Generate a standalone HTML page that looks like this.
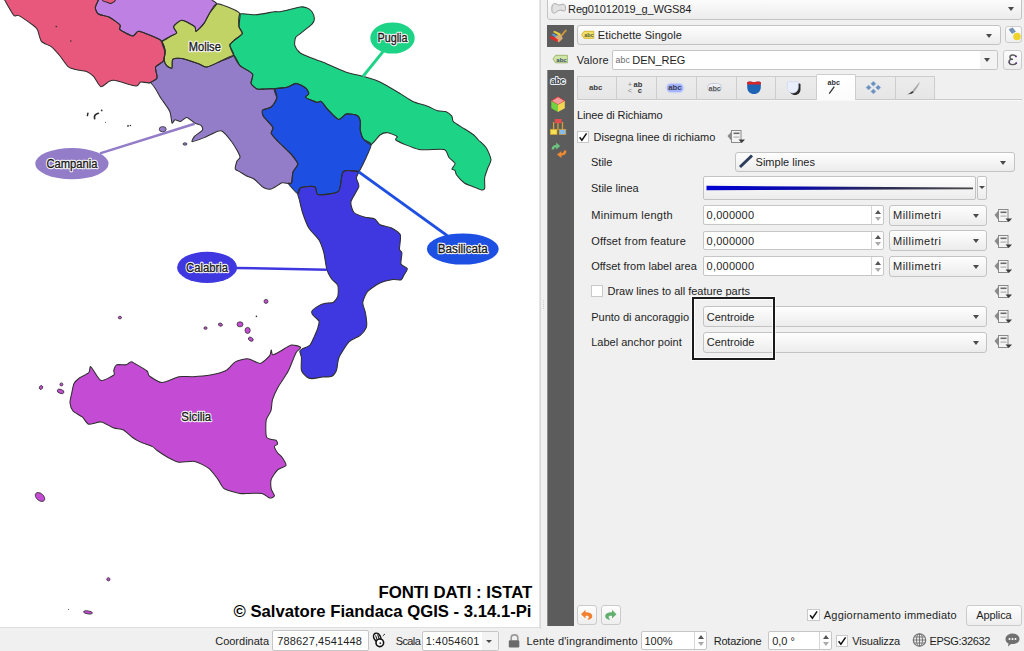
<!DOCTYPE html><html><head><meta charset="utf-8"><style>
*{margin:0;padding:0;box-sizing:border-box}
html,body{width:1024px;height:651px;overflow:hidden;background:#f0f0f0;font-family:"Liberation Sans",sans-serif;color:#1e1e1e}
.t{position:absolute;white-space:nowrap;line-height:1;font-family:"Liberation Sans",sans-serif}
.cb{position:absolute;border:1px solid #c3c3c3;border-radius:3px;background:linear-gradient(#fefefe,#ececec)}
.fld{position:absolute;border:1px solid #c6c6c6;border-radius:2px;background:#fff}
.chk{position:absolute;border:1px solid #c9c9c9;background:#fff}
.btn{position:absolute;border:1px solid #cbcbcb;border-radius:3px;background:linear-gradient(#fdfdfd,#eeeeee)}
.arr{position:absolute;width:0;height:0}
.ic{position:absolute;overflow:visible}
.sp{position:absolute;background:#d6d6d6}
.blk{position:absolute;background:#5c5c5c}
.tab{position:absolute;border:1px solid #cdcdcd;border-bottom:none;background:linear-gradient(#ececec,#e6e6e6)}
</style></head><body><div style="position:absolute;left:0;top:0;width:540px;height:627px;background:#fff;overflow:hidden"><svg width="540" height="627" viewBox="0 0 540 627" style="position:absolute;left:0;top:0"><path d="M3.0,-2.0 C-7.9,-1.8 4.1,-0.9 4.7,0.0 C5.3,0.9 6.9,4.2 8.0,6.0 C9.1,7.8 12.7,14.5 14.0,15.6 C15.3,16.7 16.6,14.5 18.8,15.6 C20.9,16.7 30.6,23.4 32.8,25.0 C35.0,26.6 36.5,27.8 37.5,29.7 C38.5,31.6 39.8,39.4 41.4,41.4 C43.0,43.4 49.4,45.2 51.6,46.9 C53.8,48.6 58.0,53.6 60.0,56.0 C62.0,58.4 66.5,65.5 68.8,67.2 C71.0,68.9 77.5,69.8 79.7,70.3 C81.9,70.8 85.9,71.2 87.5,71.9 C89.1,72.6 92.2,74.9 93.8,76.6 C95.3,78.3 99.0,86.2 100.8,86.7 C102.6,87.2 107.7,82.0 109.4,81.2 C111.1,80.5 112.5,79.9 115.6,80.5 C118.7,81.1 133.1,85.8 136.0,86.0 C138.9,86.2 139.0,82.4 140.6,82.0 C142.2,81.6 147.5,83.3 149.4,82.8 C151.3,82.3 156.3,79.8 157.0,78.0 C157.7,76.2 154.9,69.2 155.6,67.2 C156.3,65.2 162.3,63.0 163.4,61.0 C164.5,59.0 165.2,52.3 165.0,50.0 C164.8,47.7 162.6,42.7 161.9,41.4 C161.2,40.1 161.4,40.2 158.8,39.0 C156.1,37.8 142.0,31.6 139.0,31.2 C136.0,30.9 135.0,36.2 132.8,36.0 C130.6,35.8 121.5,31.0 120.0,29.7 C118.5,28.4 121.3,26.5 120.0,25.0 C118.7,23.5 111.5,18.3 109.0,17.0 C106.5,15.7 100.0,15.1 98.4,14.0 C96.8,12.9 95.3,9.4 95.3,7.8 C95.3,6.2 98.0,1.1 98.4,0.0 C98.8,-1.1 109.5,-1.8 98.4,-2.0 C87.3,-2.2 13.9,-2.2 3.0,-2.0 Z" fill="#E8577C"/><path d="M98.4,-2.0 C111.6,-2.2 198.7,-2.2 211.9,-2.0 C225.1,-1.8 211.4,-0.7 211.9,0.0 C212.4,0.7 216.8,2.4 216.6,3.9 C216.4,5.4 211.5,10.2 210.0,12.5 C208.5,14.8 205.6,21.2 204.0,23.4 C202.4,25.6 197.1,30.9 196.0,31.2 C194.9,31.6 196.3,27.9 194.7,26.6 C193.1,25.3 184.5,20.3 182.0,20.3 C179.5,20.3 174.2,25.1 173.6,26.6 C173.0,28.1 177.0,31.7 176.7,32.8 C176.4,33.9 172.7,35.0 171.0,36.0 C169.3,37.0 163.3,41.0 161.9,41.4 C160.5,41.8 161.4,40.2 158.8,39.0 C156.1,37.8 142.0,31.6 139.0,31.2 C136.0,30.9 135.0,36.2 132.8,36.0 C130.6,35.8 121.5,31.0 120.0,29.7 C118.5,28.4 121.3,26.5 120.0,25.0 C118.7,23.5 111.5,18.3 109.0,17.0 C106.5,15.7 100.0,15.1 98.4,14.0 C96.8,12.9 95.3,9.4 95.3,7.8 C95.3,6.2 98.0,1.1 98.4,0.0 C98.8,-1.1 85.2,-1.8 98.4,-2.0 Z" fill="#BE80E2"/><path d="M216.6,3.9 C219.4,3.5 231.0,8.2 233.8,9.4 C236.5,10.6 239.4,12.0 240.0,14.0 C240.6,16.0 238.7,24.3 239.0,26.6 C239.3,28.9 242.9,32.0 242.3,33.6 C241.7,35.2 235.2,39.2 233.8,40.6 C232.3,42.0 229.8,43.6 229.8,45.3 C229.8,47.0 234.8,53.7 233.8,55.5 C232.7,57.3 224.1,59.7 221.0,61.0 C217.9,62.3 209.6,66.7 207.0,67.0 C204.4,67.3 201.9,65.0 199.0,64.0 C196.1,63.0 185.1,59.1 182.0,58.6 C178.9,58.1 174.0,58.3 172.8,59.4 C171.6,60.5 172.7,67.3 172.0,68.0 C171.3,68.7 167.5,66.6 166.6,65.6 C165.7,64.6 164.2,61.0 164.0,59.4 C163.8,57.8 165.2,53.7 165.0,51.6 C164.8,49.5 161.2,43.2 161.9,41.4 C162.6,39.6 169.3,37.0 171.0,36.0 C172.7,35.0 176.4,33.9 176.7,32.8 C177.0,31.7 173.0,28.1 173.6,26.6 C174.2,25.1 179.5,20.3 182.0,20.3 C184.5,20.3 193.1,25.3 194.7,26.6 C196.3,27.9 194.9,31.6 196.0,31.2 C197.1,30.9 202.4,25.6 204.0,23.4 C205.6,21.2 208.5,14.8 210.0,12.5 C211.5,10.2 213.8,4.3 216.6,3.9 Z" fill="#C2D366"/><path d="M240.0,14.0 C241.9,12.6 251.6,15.1 255.6,14.8 C259.6,14.5 271.6,12.1 274.4,11.7 C277.2,11.3 277.0,12.2 280.0,11.7 C283.0,11.2 297.2,7.5 300.3,7.0 C303.4,6.5 305.2,7.3 306.6,7.8 C308.0,8.3 311.1,10.4 312.0,11.7 C312.9,13.0 314.4,17.3 314.4,18.8 C314.4,20.2 313.6,22.5 312.0,24.2 C310.4,25.9 302.2,32.0 300.3,33.6 C298.4,35.2 296.2,36.1 295.6,37.5 C295.0,38.9 294.3,43.5 294.8,45.3 C295.3,47.1 297.8,51.3 300.3,53.0 C302.8,54.7 313.9,58.9 316.6,60.0 C319.3,61.1 320.4,61.1 323.8,62.5 C327.1,63.9 341.0,70.3 345.6,71.9 C350.2,73.5 359.4,75.2 363.4,76.4 C367.4,77.6 375.7,79.9 380.0,81.9 C384.3,83.9 396.5,91.3 400.3,93.6 C404.1,95.9 409.7,100.0 412.8,101.4 C415.9,102.8 424.0,104.9 426.9,106.0 C429.8,107.1 435.6,110.1 437.8,110.8 C440.0,111.5 444.0,111.0 445.6,111.6 C447.2,112.2 451.0,115.1 451.9,116.2 C452.8,117.4 451.9,120.2 453.4,121.7 C454.9,123.2 462.0,127.2 464.4,128.8 C466.8,130.3 472.1,133.7 473.8,135.0 C475.4,136.3 476.9,138.5 478.4,140.0 C479.9,141.5 484.8,145.5 486.2,147.8 C487.7,150.1 490.8,157.1 491.0,159.5 C491.2,161.9 488.5,165.9 487.8,168.0 C487.1,170.1 485.1,175.1 484.7,177.5 C484.3,179.9 485.1,186.9 484.7,188.4 C484.3,189.9 482.9,190.2 481.6,190.0 C480.3,189.8 475.8,187.7 473.8,186.9 C471.7,186.1 466.4,184.4 464.4,183.0 C462.4,181.6 457.7,176.5 456.6,175.0 C455.5,173.5 455.5,171.2 455.0,170.5 C454.5,169.8 451.9,169.8 451.9,169.0 C451.9,168.2 455.4,164.8 455.0,163.4 C454.6,162.0 450.0,158.8 448.8,157.2 C447.5,155.6 447.5,150.3 444.0,149.4 C440.5,148.5 424.6,150.4 419.0,149.4 C413.4,148.4 398.9,142.0 396.4,140.5 C393.9,139.0 398.2,137.5 397.2,136.6 C396.2,135.7 389.8,132.9 387.8,132.7 C385.8,132.5 381.9,133.6 380.0,135.0 C378.1,136.4 373.2,143.9 371.2,144.4 C369.3,144.9 364.7,140.6 363.4,139.0 C362.1,137.4 360.7,132.4 360.3,130.3 C359.9,128.2 360.7,122.7 360.3,121.0 C359.9,119.3 358.8,116.3 357.2,115.5 C355.6,114.7 348.4,113.5 346.2,114.0 C344.1,114.5 340.6,120.0 338.4,119.4 C336.2,118.8 329.5,111.3 327.5,109.2 C325.5,107.1 322.5,102.2 321.2,101.4 C320.0,100.6 318.4,102.7 316.6,102.2 C314.8,101.7 306.5,98.5 305.6,97.5 C304.7,96.5 308.8,94.7 308.8,93.6 C308.8,92.5 307.1,89.2 305.6,88.0 C304.1,86.8 298.4,83.5 296.2,83.4 C294.1,83.3 289.4,86.7 286.9,87.3 C284.4,87.9 277.0,88.7 274.4,88.9 C271.8,89.1 267.0,89.0 265.0,89.0 C263.0,89.0 258.8,89.7 257.2,89.0 C255.6,88.3 251.5,85.2 251.0,83.4 C250.5,81.7 253.8,76.1 252.5,74.0 C251.2,71.9 242.2,67.8 240.0,65.6 C237.8,63.4 234.9,57.9 233.8,55.5 C232.6,53.1 229.8,47.0 229.8,45.3 C229.8,43.6 232.3,42.0 233.8,40.6 C235.2,39.2 241.7,35.2 242.3,33.6 C242.9,32.0 239.3,28.9 239.0,26.6 C238.7,24.3 238.1,15.4 240.0,14.0 Z" fill="#1DD386"/><path d="M161.9,41.4 C161.9,41.2 164.8,47.7 165.0,50.0 C165.2,52.3 164.5,59.0 163.4,61.0 C162.3,63.0 156.3,65.2 155.6,67.2 C154.9,69.2 157.7,76.2 157.0,78.0 C156.3,79.8 150.1,82.2 149.4,82.8 C148.7,83.4 150.3,82.3 151.0,83.0 C151.7,83.7 154.5,87.3 155.6,89.0 C156.7,90.7 158.7,94.6 160.3,97.2 C161.9,99.8 168.3,108.2 169.7,111.2 C171.1,114.3 171.4,122.0 172.0,123.0 C172.6,124.0 174.0,120.0 175.0,119.8 C176.0,119.6 179.2,121.7 180.6,121.4 C182.0,121.1 185.3,117.3 186.9,117.5 C188.5,117.7 193.1,122.1 194.7,123.0 C196.3,123.9 200.1,124.5 201.0,125.3 C201.9,126.1 203.2,128.7 202.5,130.0 C201.8,131.3 195.9,134.9 194.7,136.2 C193.5,137.6 191.0,141.6 192.3,141.7 C193.6,141.8 203.3,137.9 205.6,137.0 C207.9,136.1 210.1,134.7 211.9,134.0 C213.7,133.3 218.9,129.8 221.2,130.8 C223.6,131.8 230.0,139.5 232.2,142.5 C234.4,145.5 239.5,154.4 240.0,156.6 C240.5,158.8 237.4,159.8 236.9,161.2 C236.4,162.7 234.9,167.8 235.3,169.0 C235.7,170.2 238.7,171.1 240.0,171.9 C241.3,172.7 244.6,175.0 246.2,175.8 C247.9,176.6 252.0,177.6 254.0,179.0 C256.0,180.4 261.4,186.3 263.4,187.5 C265.4,188.7 269.1,189.5 271.2,189.0 C273.4,188.5 280.2,183.4 282.2,182.8 C284.2,182.2 287.3,183.6 288.4,183.6 C289.5,183.6 291.1,184.2 291.6,182.8 C292.1,181.4 292.3,174.1 293.0,171.9 C293.7,169.7 298.0,166.0 297.8,164.0 C297.6,162.0 292.9,156.3 291.6,154.7 C290.3,153.1 288.5,151.6 286.9,150.0 C285.3,148.4 279.3,142.9 277.5,141.0 C275.7,139.1 271.8,135.0 271.2,133.4 C270.7,131.8 273.7,129.2 272.8,127.2 C271.9,125.2 264.6,118.3 263.4,116.2 C262.2,114.2 261.8,111.1 262.7,110.0 C263.6,108.9 269.6,108.4 271.2,107.0 C272.9,105.6 276.3,100.4 276.7,98.3 C277.1,96.2 275.8,90.0 274.4,88.9 C273.0,87.8 267.0,89.0 265.0,89.0 C263.0,89.0 258.8,89.7 257.2,89.0 C255.6,88.3 251.5,85.2 251.0,83.4 C250.5,81.7 253.8,76.1 252.5,74.0 C251.2,71.9 242.2,67.8 240.0,65.6 C237.8,63.4 236.0,56.0 233.8,55.5 C231.5,55.0 224.1,59.7 221.0,61.0 C217.9,62.3 209.6,66.7 207.0,67.0 C204.4,67.3 201.9,65.0 199.0,64.0 C196.1,63.0 185.1,59.1 182.0,58.6 C178.9,58.1 174.0,58.3 172.8,59.4 C171.6,60.5 172.7,67.3 172.0,68.0 C171.3,68.7 167.5,66.6 166.6,65.6 C165.7,64.6 164.2,61.0 164.0,59.4 C163.8,57.8 165.2,53.7 165.0,51.6 C164.8,49.5 161.9,41.6 161.9,41.4 Z" fill="#937DC9"/><path d="M274.4,88.9 C275.6,87.6 284.4,87.9 286.9,87.3 C289.4,86.7 294.1,83.3 296.2,83.4 C298.4,83.5 304.1,86.8 305.6,88.0 C307.1,89.2 308.8,92.5 308.8,93.6 C308.8,94.7 304.7,96.5 305.6,97.5 C306.5,98.5 314.8,101.7 316.6,102.2 C318.4,102.7 320.0,100.6 321.2,101.4 C322.5,102.2 325.5,107.1 327.5,109.2 C329.5,111.3 336.2,118.8 338.4,119.4 C340.6,120.0 344.1,114.5 346.2,114.0 C348.4,113.5 355.6,114.7 357.2,115.5 C358.8,116.3 359.9,119.3 360.3,121.0 C360.7,122.7 359.9,128.2 360.3,130.3 C360.7,132.4 362.1,137.4 363.4,139.0 C364.7,140.6 371.1,142.0 371.2,144.4 C371.4,146.8 366.5,156.8 365.0,160.0 C363.5,163.2 359.8,170.6 358.8,171.9 C357.7,173.2 357.4,171.0 355.6,171.0 C353.8,171.0 345.0,169.5 343.0,171.9 C341.0,174.3 341.3,188.8 338.4,191.4 C335.5,194.0 320.7,195.0 318.0,194.5 C315.3,194.0 317.0,187.5 315.0,186.7 C313.0,185.9 303.0,186.7 301.0,187.5 C299.0,188.3 299.3,194.2 297.8,193.8 C296.3,193.3 289.1,184.9 288.4,183.6 C287.7,182.3 291.1,184.2 291.6,182.8 C292.1,181.4 292.3,174.1 293.0,171.9 C293.7,169.7 298.0,166.0 297.8,164.0 C297.6,162.0 292.9,156.3 291.6,154.7 C290.3,153.1 288.5,151.6 286.9,150.0 C285.3,148.4 279.3,142.9 277.5,141.0 C275.7,139.1 271.8,135.0 271.2,133.4 C270.7,131.8 273.7,129.2 272.8,127.2 C271.9,125.2 264.6,118.3 263.4,116.2 C262.2,114.2 261.8,111.1 262.7,110.0 C263.6,108.9 269.6,108.4 271.2,107.0 C272.9,105.6 276.3,100.4 276.7,98.3 C277.1,96.2 273.2,90.2 274.4,88.9 Z" fill="#1C4FE2"/><path d="M297.8,193.8 C298.0,192.3 299.0,188.3 301.0,187.5 C303.0,186.7 313.0,185.9 315.0,186.7 C317.0,187.5 315.3,194.0 318.0,194.5 C320.7,195.0 335.5,194.0 338.4,191.4 C341.3,188.8 341.0,174.3 343.0,171.9 C345.0,169.5 353.8,171.0 355.6,171.0 C357.4,171.0 358.7,171.1 358.8,171.9 C358.8,172.7 356.4,176.3 356.4,178.0 C356.4,179.7 359.4,183.9 358.8,186.7 C358.1,189.5 351.6,198.6 351.0,201.6 C350.4,204.6 352.4,210.7 354.0,212.5 C355.6,214.3 362.6,216.5 365.0,217.2 C367.4,217.9 372.6,217.9 374.4,218.8 C376.1,219.6 378.1,223.6 380.0,224.7 C381.9,225.8 388.6,226.6 391.0,227.8 C393.4,229.0 399.3,232.3 400.3,234.8 C401.3,237.3 399.3,246.9 399.5,249.0 C399.7,251.1 401.7,251.2 401.9,253.0 C402.1,254.8 400.4,262.2 401.0,264.0 C401.6,265.8 406.9,267.4 407.3,268.7 C407.7,270.0 404.7,273.7 404.0,275.0 C403.3,276.3 402.3,279.5 401.0,280.0 C399.7,280.5 395.4,279.1 393.0,279.5 C390.6,279.9 383.0,281.6 380.0,283.0 C377.0,284.4 369.5,289.3 367.5,291.6 C365.5,293.9 363.1,300.1 362.8,302.5 C362.5,304.9 364.7,309.6 365.2,311.9 C365.7,314.2 366.6,320.1 366.7,322.0 C366.8,323.9 367.0,326.2 366.2,327.8 C365.5,329.4 362.0,334.0 360.0,335.6 C358.0,337.2 351.4,339.3 349.0,341.9 C346.6,344.5 340.4,354.2 339.0,357.5 C337.6,360.8 337.4,367.8 336.6,370.0 C335.8,372.2 333.5,375.4 331.9,376.2 C330.3,377.1 324.9,376.7 322.5,377.0 C320.1,377.3 313.4,378.6 311.6,378.6 C309.8,378.6 308.1,378.0 306.9,377.0 C305.7,376.0 302.0,372.3 301.4,370.0 C300.8,367.7 301.6,359.7 301.4,357.5 C301.2,355.3 299.7,352.2 299.8,351.2 C299.9,350.3 301.0,349.7 302.2,349.0 C303.4,348.3 308.5,346.6 310.0,345.0 C311.5,343.4 313.8,337.5 314.7,335.6 C315.6,333.7 317.0,330.7 317.5,329.0 C318.0,327.3 319.5,322.9 319.0,321.2 C318.5,319.6 313.6,316.2 312.8,315.0 C312.0,313.8 311.3,312.1 312.0,311.0 C312.7,309.9 317.4,306.5 319.0,305.6 C320.6,304.7 323.7,303.7 325.3,303.3 C326.9,302.9 331.5,303.3 333.0,302.5 C334.5,301.7 337.2,298.3 337.8,296.2 C338.4,294.2 338.5,287.3 337.8,285.3 C337.1,283.3 332.9,280.8 331.6,279.0 C330.3,277.2 327.8,272.8 326.9,269.7 C326.0,266.6 324.7,256.0 323.8,252.5 C322.8,249.0 320.8,242.9 319.0,240.0 C317.2,237.1 310.7,231.2 308.8,228.0 C306.8,224.8 303.6,215.8 302.5,212.5 C301.4,209.2 299.9,202.2 299.4,200.0 C298.9,197.8 297.6,195.2 297.8,193.8 Z" fill="#3F38E0"/><path d="M71.6,393.8 C72.1,391.5 73.1,385.4 74.0,383.6 C74.9,381.8 77.7,379.3 79.4,378.0 C81.1,376.7 87.5,374.1 88.8,372.7 C90.0,371.3 89.8,366.7 90.3,366.4 C90.8,366.1 92.1,368.7 93.4,370.3 C94.7,371.9 98.9,380.0 101.2,380.5 C103.6,381.0 112.3,376.2 113.8,375.0 C115.2,373.8 113.4,371.5 113.8,370.3 C114.1,369.1 115.4,365.4 116.9,364.8 C118.4,364.2 124.6,365.2 126.2,364.8 C127.9,364.4 129.9,361.8 131.0,361.7 C132.1,361.6 133.7,362.9 135.6,364.0 C137.5,365.1 145.4,369.6 147.0,371.0 C148.6,372.4 147.7,374.7 149.4,376.0 C151.2,377.3 158.5,382.4 162.0,382.5 C165.5,382.6 175.4,377.4 179.0,376.7 C182.6,376.0 189.3,376.9 193.0,376.7 C196.7,376.5 206.5,375.7 210.3,375.0 C214.2,374.3 223.1,372.0 226.0,370.5 C228.9,369.0 232.8,363.3 235.3,361.9 C237.8,360.5 244.9,358.6 247.8,358.8 C250.7,358.9 257.7,363.8 260.3,363.4 C262.9,363.0 268.4,357.2 269.7,355.6 C271.0,354.0 270.9,350.1 271.2,350.0 C271.6,349.9 271.7,354.7 272.8,354.8 C273.9,354.9 278.1,352.4 280.3,351.2 C282.5,350.1 288.9,345.5 291.2,345.0 C293.6,344.5 300.0,346.4 300.6,347.3 C301.2,348.2 297.5,350.0 296.0,352.8 C294.5,355.6 290.1,367.6 288.0,371.6 C285.9,375.6 279.8,383.9 278.0,387.2 C276.2,390.5 273.3,397.0 272.5,399.7 C271.7,402.4 271.7,408.2 271.0,410.6 C270.3,413.0 266.8,416.9 266.2,420.0 C265.7,423.1 265.5,434.8 266.6,437.2 C267.7,439.6 274.7,439.5 276.0,440.3 C277.3,441.1 277.7,443.5 277.5,444.2 C277.3,444.9 274.4,445.6 274.4,446.6 C274.4,447.6 276.6,451.5 277.5,452.8 C278.4,454.1 281.2,456.0 282.2,457.5 C283.2,459.0 286.5,463.8 286.0,465.3 C285.5,466.8 279.2,468.4 277.5,470.0 C275.8,471.6 272.0,477.2 271.2,479.4 C270.5,481.6 270.9,486.8 271.2,488.8 C271.6,490.7 274.6,494.7 274.4,495.8 C274.2,496.9 271.2,498.3 269.7,498.0 C268.2,497.7 264.3,493.9 261.9,493.4 C259.5,492.9 252.0,493.4 249.4,493.4 C246.8,493.4 242.9,493.9 240.0,493.4 C237.1,492.9 227.0,490.4 224.4,488.8 C221.8,487.1 219.8,481.8 218.0,479.4 C216.2,477.0 211.5,470.5 208.8,468.4 C206.0,466.3 198.2,462.1 194.7,461.4 C191.2,460.7 182.1,462.7 179.0,462.2 C175.9,461.7 170.5,458.9 168.0,457.5 C165.5,456.1 159.0,451.8 157.2,450.5 C155.4,449.2 154.5,447.6 152.5,446.6 C150.5,445.6 142.3,443.0 140.0,441.9 C137.7,440.8 134.5,438.9 132.5,437.5 C130.5,436.1 125.2,430.8 123.0,429.7 C120.8,428.6 116.3,428.9 113.8,428.0 C111.2,427.1 104.2,422.3 101.2,421.9 C98.3,421.5 90.9,424.7 88.8,424.2 C86.6,423.7 84.3,418.7 82.5,417.2 C80.7,415.7 74.5,412.7 73.0,411.0 C71.5,409.3 70.2,405.0 70.0,403.0 C69.8,401.0 71.1,396.0 71.6,393.8 Z" fill="#C44BD3"/><path d="M102.3,-2 L102.6,0.6 C104,1.8 106.5,1.8 108,2.4 C109,3.6 110.5,3.8 112,3 C114,2.5 115.5,1.2 115.9,-2 Z" fill="#E8577C" stroke="#2e2e2e" stroke-width="1.05"/><ellipse cx="40" cy="497" rx="5.5" ry="3.5" transform="rotate(40 40 497)" fill="#C44BD3" stroke="#333" stroke-width="0.8"/><ellipse cx="119.9" cy="317.6" rx="1.6" ry="1.3" transform="rotate(0 119.9 317.6)" fill="#C44BD3" stroke="#333" stroke-width="0.8"/><ellipse cx="205.5" cy="328.1" rx="1.6" ry="1.3" transform="rotate(0 205.5 328.1)" fill="#C44BD3" stroke="#333" stroke-width="0.8"/><ellipse cx="220.4" cy="324.6" rx="2" ry="1.5" transform="rotate(20 220.4 324.6)" fill="#C44BD3" stroke="#333" stroke-width="0.8"/><ellipse cx="240" cy="324.3" rx="3" ry="2.5" transform="rotate(0 240 324.3)" fill="#C44BD3" stroke="#333" stroke-width="0.8"/><ellipse cx="247.6" cy="330.4" rx="2.6" ry="3" transform="rotate(0 247.6 330.4)" fill="#C44BD3" stroke="#333" stroke-width="0.8"/><ellipse cx="250.8" cy="339.2" rx="2.6" ry="1.8" transform="rotate(30 250.8 339.2)" fill="#C44BD3" stroke="#333" stroke-width="0.8"/><ellipse cx="266" cy="301.4" rx="2" ry="2" transform="rotate(0 266 301.4)" fill="#C44BD3" stroke="#333" stroke-width="0.8"/><ellipse cx="41" cy="387.5" rx="1.6" ry="2" transform="rotate(30 41 387.5)" fill="#C44BD3" stroke="#333" stroke-width="0.8"/><ellipse cx="61.4" cy="384.4" rx="1.5" ry="1.5" transform="rotate(0 61.4 384.4)" fill="#C44BD3" stroke="#333" stroke-width="0.8"/><ellipse cx="60.6" cy="391.4" rx="3.5" ry="2" transform="rotate(20 60.6 391.4)" fill="#C44BD3" stroke="#333" stroke-width="0.8"/><ellipse cx="108.4" cy="579.3" rx="1.6" ry="1.6" transform="rotate(0 108.4 579.3)" fill="#C44BD3" stroke="#333" stroke-width="0.8"/><ellipse cx="88" cy="612.4" rx="4.5" ry="1.5" transform="rotate(8 88 612.4)" fill="#C44BD3" stroke="#333" stroke-width="0.8"/><ellipse cx="162.7" cy="129.2" rx="3.5" ry="2.6" fill="#937DC9" stroke="#333" stroke-width="0.8"/><ellipse cx="185" cy="144" rx="2" ry="1.2" fill="#937DC9" stroke="#333" stroke-width="0.8"/><path d="M98.3,113.3 C95.5,114 94,116 94.6,118.6" fill="none" stroke="#2a2a2a" stroke-width="1.7" stroke-linecap="round"/><path d="M87.9,113.2 L87.4,115.6" fill="none" stroke="#2a2a2a" stroke-width="1.5" stroke-linecap="round"/><circle cx="101.7" cy="110.4" r="0.9" fill="#333"/><circle cx="105.5" cy="122.3" r="0.5" fill="#333"/><circle cx="128" cy="125.9" r="0.9" fill="#333"/><circle cx="130.4" cy="125.5" r="0.8" fill="#333"/><circle cx="56.25" cy="26.6" r="0.8" fill="#333"/><circle cx="70.8" cy="41" r="0.8" fill="#333"/><circle cx="68.4" cy="609.4" r="0.5" fill="#333"/><circle cx="256.4" cy="316.4" r="0.8" fill="#333"/><path d="M3.0,-2.0 C-7.9,-1.8 4.1,-0.9 4.7,0.0 C5.3,0.9 6.9,4.2 8.0,6.0 C9.1,7.8 12.7,14.5 14.0,15.6 C15.3,16.7 16.6,14.5 18.8,15.6 C20.9,16.7 30.6,23.4 32.8,25.0 C35.0,26.6 36.5,27.8 37.5,29.7 C38.5,31.6 39.8,39.4 41.4,41.4 C43.0,43.4 49.4,45.2 51.6,46.9 C53.8,48.6 58.0,53.6 60.0,56.0 C62.0,58.4 66.5,65.5 68.8,67.2 C71.0,68.9 77.5,69.8 79.7,70.3 C81.9,70.8 85.9,71.2 87.5,71.9 C89.1,72.6 92.2,74.9 93.8,76.6 C95.3,78.3 99.0,86.2 100.8,86.7 C102.6,87.2 107.7,82.0 109.4,81.2 C111.1,80.5 112.5,79.9 115.6,80.5 C118.7,81.1 133.1,85.8 136.0,86.0 C138.9,86.2 139.0,82.4 140.6,82.0 C142.2,81.6 147.5,83.3 149.4,82.8 C151.3,82.3 156.3,79.8 157.0,78.0 C157.7,76.2 154.9,69.2 155.6,67.2 C156.3,65.2 162.3,63.0 163.4,61.0 C164.5,59.0 165.2,52.3 165.0,50.0 C164.8,47.7 162.6,42.7 161.9,41.4 C161.2,40.1 161.4,40.2 158.8,39.0 C156.1,37.8 142.0,31.6 139.0,31.2 C136.0,30.9 135.0,36.2 132.8,36.0 C130.6,35.8 121.5,31.0 120.0,29.7 C118.5,28.4 121.3,26.5 120.0,25.0 C118.7,23.5 111.5,18.3 109.0,17.0 C106.5,15.7 100.0,15.1 98.4,14.0 C96.8,12.9 95.3,9.4 95.3,7.8 C95.3,6.2 98.0,1.1 98.4,0.0 C98.8,-1.1 109.5,-1.8 98.4,-2.0 C87.3,-2.2 13.9,-2.2 3.0,-2.0 Z" fill="none" stroke="#2e2e2e" stroke-width="1.05" stroke-linejoin="round"/><path d="M98.4,-2.0 C111.6,-2.2 198.7,-2.2 211.9,-2.0 C225.1,-1.8 211.4,-0.7 211.9,0.0 C212.4,0.7 216.8,2.4 216.6,3.9 C216.4,5.4 211.5,10.2 210.0,12.5 C208.5,14.8 205.6,21.2 204.0,23.4 C202.4,25.6 197.1,30.9 196.0,31.2 C194.9,31.6 196.3,27.9 194.7,26.6 C193.1,25.3 184.5,20.3 182.0,20.3 C179.5,20.3 174.2,25.1 173.6,26.6 C173.0,28.1 177.0,31.7 176.7,32.8 C176.4,33.9 172.7,35.0 171.0,36.0 C169.3,37.0 163.3,41.0 161.9,41.4 C160.5,41.8 161.4,40.2 158.8,39.0 C156.1,37.8 142.0,31.6 139.0,31.2 C136.0,30.9 135.0,36.2 132.8,36.0 C130.6,35.8 121.5,31.0 120.0,29.7 C118.5,28.4 121.3,26.5 120.0,25.0 C118.7,23.5 111.5,18.3 109.0,17.0 C106.5,15.7 100.0,15.1 98.4,14.0 C96.8,12.9 95.3,9.4 95.3,7.8 C95.3,6.2 98.0,1.1 98.4,0.0 C98.8,-1.1 85.2,-1.8 98.4,-2.0 Z" fill="none" stroke="#2e2e2e" stroke-width="1.05" stroke-linejoin="round"/><path d="M216.6,3.9 C219.4,3.5 231.0,8.2 233.8,9.4 C236.5,10.6 239.4,12.0 240.0,14.0 C240.6,16.0 238.7,24.3 239.0,26.6 C239.3,28.9 242.9,32.0 242.3,33.6 C241.7,35.2 235.2,39.2 233.8,40.6 C232.3,42.0 229.8,43.6 229.8,45.3 C229.8,47.0 234.8,53.7 233.8,55.5 C232.7,57.3 224.1,59.7 221.0,61.0 C217.9,62.3 209.6,66.7 207.0,67.0 C204.4,67.3 201.9,65.0 199.0,64.0 C196.1,63.0 185.1,59.1 182.0,58.6 C178.9,58.1 174.0,58.3 172.8,59.4 C171.6,60.5 172.7,67.3 172.0,68.0 C171.3,68.7 167.5,66.6 166.6,65.6 C165.7,64.6 164.2,61.0 164.0,59.4 C163.8,57.8 165.2,53.7 165.0,51.6 C164.8,49.5 161.2,43.2 161.9,41.4 C162.6,39.6 169.3,37.0 171.0,36.0 C172.7,35.0 176.4,33.9 176.7,32.8 C177.0,31.7 173.0,28.1 173.6,26.6 C174.2,25.1 179.5,20.3 182.0,20.3 C184.5,20.3 193.1,25.3 194.7,26.6 C196.3,27.9 194.9,31.6 196.0,31.2 C197.1,30.9 202.4,25.6 204.0,23.4 C205.6,21.2 208.5,14.8 210.0,12.5 C211.5,10.2 213.8,4.3 216.6,3.9 Z" fill="none" stroke="#2e2e2e" stroke-width="1.05" stroke-linejoin="round"/><path d="M240.0,14.0 C241.9,12.6 251.6,15.1 255.6,14.8 C259.6,14.5 271.6,12.1 274.4,11.7 C277.2,11.3 277.0,12.2 280.0,11.7 C283.0,11.2 297.2,7.5 300.3,7.0 C303.4,6.5 305.2,7.3 306.6,7.8 C308.0,8.3 311.1,10.4 312.0,11.7 C312.9,13.0 314.4,17.3 314.4,18.8 C314.4,20.2 313.6,22.5 312.0,24.2 C310.4,25.9 302.2,32.0 300.3,33.6 C298.4,35.2 296.2,36.1 295.6,37.5 C295.0,38.9 294.3,43.5 294.8,45.3 C295.3,47.1 297.8,51.3 300.3,53.0 C302.8,54.7 313.9,58.9 316.6,60.0 C319.3,61.1 320.4,61.1 323.8,62.5 C327.1,63.9 341.0,70.3 345.6,71.9 C350.2,73.5 359.4,75.2 363.4,76.4 C367.4,77.6 375.7,79.9 380.0,81.9 C384.3,83.9 396.5,91.3 400.3,93.6 C404.1,95.9 409.7,100.0 412.8,101.4 C415.9,102.8 424.0,104.9 426.9,106.0 C429.8,107.1 435.6,110.1 437.8,110.8 C440.0,111.5 444.0,111.0 445.6,111.6 C447.2,112.2 451.0,115.1 451.9,116.2 C452.8,117.4 451.9,120.2 453.4,121.7 C454.9,123.2 462.0,127.2 464.4,128.8 C466.8,130.3 472.1,133.7 473.8,135.0 C475.4,136.3 476.9,138.5 478.4,140.0 C479.9,141.5 484.8,145.5 486.2,147.8 C487.7,150.1 490.8,157.1 491.0,159.5 C491.2,161.9 488.5,165.9 487.8,168.0 C487.1,170.1 485.1,175.1 484.7,177.5 C484.3,179.9 485.1,186.9 484.7,188.4 C484.3,189.9 482.9,190.2 481.6,190.0 C480.3,189.8 475.8,187.7 473.8,186.9 C471.7,186.1 466.4,184.4 464.4,183.0 C462.4,181.6 457.7,176.5 456.6,175.0 C455.5,173.5 455.5,171.2 455.0,170.5 C454.5,169.8 451.9,169.8 451.9,169.0 C451.9,168.2 455.4,164.8 455.0,163.4 C454.6,162.0 450.0,158.8 448.8,157.2 C447.5,155.6 447.5,150.3 444.0,149.4 C440.5,148.5 424.6,150.4 419.0,149.4 C413.4,148.4 398.9,142.0 396.4,140.5 C393.9,139.0 398.2,137.5 397.2,136.6 C396.2,135.7 389.8,132.9 387.8,132.7 C385.8,132.5 381.9,133.6 380.0,135.0 C378.1,136.4 373.2,143.9 371.2,144.4 C369.3,144.9 364.7,140.6 363.4,139.0 C362.1,137.4 360.7,132.4 360.3,130.3 C359.9,128.2 360.7,122.7 360.3,121.0 C359.9,119.3 358.8,116.3 357.2,115.5 C355.6,114.7 348.4,113.5 346.2,114.0 C344.1,114.5 340.6,120.0 338.4,119.4 C336.2,118.8 329.5,111.3 327.5,109.2 C325.5,107.1 322.5,102.2 321.2,101.4 C320.0,100.6 318.4,102.7 316.6,102.2 C314.8,101.7 306.5,98.5 305.6,97.5 C304.7,96.5 308.8,94.7 308.8,93.6 C308.8,92.5 307.1,89.2 305.6,88.0 C304.1,86.8 298.4,83.5 296.2,83.4 C294.1,83.3 289.4,86.7 286.9,87.3 C284.4,87.9 277.0,88.7 274.4,88.9 C271.8,89.1 267.0,89.0 265.0,89.0 C263.0,89.0 258.8,89.7 257.2,89.0 C255.6,88.3 251.5,85.2 251.0,83.4 C250.5,81.7 253.8,76.1 252.5,74.0 C251.2,71.9 242.2,67.8 240.0,65.6 C237.8,63.4 234.9,57.9 233.8,55.5 C232.6,53.1 229.8,47.0 229.8,45.3 C229.8,43.6 232.3,42.0 233.8,40.6 C235.2,39.2 241.7,35.2 242.3,33.6 C242.9,32.0 239.3,28.9 239.0,26.6 C238.7,24.3 238.1,15.4 240.0,14.0 Z" fill="none" stroke="#2e2e2e" stroke-width="1.05" stroke-linejoin="round"/><path d="M161.9,41.4 C161.9,41.2 164.8,47.7 165.0,50.0 C165.2,52.3 164.5,59.0 163.4,61.0 C162.3,63.0 156.3,65.2 155.6,67.2 C154.9,69.2 157.7,76.2 157.0,78.0 C156.3,79.8 150.1,82.2 149.4,82.8 C148.7,83.4 150.3,82.3 151.0,83.0 C151.7,83.7 154.5,87.3 155.6,89.0 C156.7,90.7 158.7,94.6 160.3,97.2 C161.9,99.8 168.3,108.2 169.7,111.2 C171.1,114.3 171.4,122.0 172.0,123.0 C172.6,124.0 174.0,120.0 175.0,119.8 C176.0,119.6 179.2,121.7 180.6,121.4 C182.0,121.1 185.3,117.3 186.9,117.5 C188.5,117.7 193.1,122.1 194.7,123.0 C196.3,123.9 200.1,124.5 201.0,125.3 C201.9,126.1 203.2,128.7 202.5,130.0 C201.8,131.3 195.9,134.9 194.7,136.2 C193.5,137.6 191.0,141.6 192.3,141.7 C193.6,141.8 203.3,137.9 205.6,137.0 C207.9,136.1 210.1,134.7 211.9,134.0 C213.7,133.3 218.9,129.8 221.2,130.8 C223.6,131.8 230.0,139.5 232.2,142.5 C234.4,145.5 239.5,154.4 240.0,156.6 C240.5,158.8 237.4,159.8 236.9,161.2 C236.4,162.7 234.9,167.8 235.3,169.0 C235.7,170.2 238.7,171.1 240.0,171.9 C241.3,172.7 244.6,175.0 246.2,175.8 C247.9,176.6 252.0,177.6 254.0,179.0 C256.0,180.4 261.4,186.3 263.4,187.5 C265.4,188.7 269.1,189.5 271.2,189.0 C273.4,188.5 280.2,183.4 282.2,182.8 C284.2,182.2 287.3,183.6 288.4,183.6 C289.5,183.6 291.1,184.2 291.6,182.8 C292.1,181.4 292.3,174.1 293.0,171.9 C293.7,169.7 298.0,166.0 297.8,164.0 C297.6,162.0 292.9,156.3 291.6,154.7 C290.3,153.1 288.5,151.6 286.9,150.0 C285.3,148.4 279.3,142.9 277.5,141.0 C275.7,139.1 271.8,135.0 271.2,133.4 C270.7,131.8 273.7,129.2 272.8,127.2 C271.9,125.2 264.6,118.3 263.4,116.2 C262.2,114.2 261.8,111.1 262.7,110.0 C263.6,108.9 269.6,108.4 271.2,107.0 C272.9,105.6 276.3,100.4 276.7,98.3 C277.1,96.2 275.8,90.0 274.4,88.9 C273.0,87.8 267.0,89.0 265.0,89.0 C263.0,89.0 258.8,89.7 257.2,89.0 C255.6,88.3 251.5,85.2 251.0,83.4 C250.5,81.7 253.8,76.1 252.5,74.0 C251.2,71.9 242.2,67.8 240.0,65.6 C237.8,63.4 236.0,56.0 233.8,55.5 C231.5,55.0 224.1,59.7 221.0,61.0 C217.9,62.3 209.6,66.7 207.0,67.0 C204.4,67.3 201.9,65.0 199.0,64.0 C196.1,63.0 185.1,59.1 182.0,58.6 C178.9,58.1 174.0,58.3 172.8,59.4 C171.6,60.5 172.7,67.3 172.0,68.0 C171.3,68.7 167.5,66.6 166.6,65.6 C165.7,64.6 164.2,61.0 164.0,59.4 C163.8,57.8 165.2,53.7 165.0,51.6 C164.8,49.5 161.9,41.6 161.9,41.4 Z" fill="none" stroke="#2e2e2e" stroke-width="1.05" stroke-linejoin="round"/><path d="M274.4,88.9 C275.6,87.6 284.4,87.9 286.9,87.3 C289.4,86.7 294.1,83.3 296.2,83.4 C298.4,83.5 304.1,86.8 305.6,88.0 C307.1,89.2 308.8,92.5 308.8,93.6 C308.8,94.7 304.7,96.5 305.6,97.5 C306.5,98.5 314.8,101.7 316.6,102.2 C318.4,102.7 320.0,100.6 321.2,101.4 C322.5,102.2 325.5,107.1 327.5,109.2 C329.5,111.3 336.2,118.8 338.4,119.4 C340.6,120.0 344.1,114.5 346.2,114.0 C348.4,113.5 355.6,114.7 357.2,115.5 C358.8,116.3 359.9,119.3 360.3,121.0 C360.7,122.7 359.9,128.2 360.3,130.3 C360.7,132.4 362.1,137.4 363.4,139.0 C364.7,140.6 371.1,142.0 371.2,144.4 C371.4,146.8 366.5,156.8 365.0,160.0 C363.5,163.2 359.8,170.6 358.8,171.9 C357.7,173.2 357.4,171.0 355.6,171.0 C353.8,171.0 345.0,169.5 343.0,171.9 C341.0,174.3 341.3,188.8 338.4,191.4 C335.5,194.0 320.7,195.0 318.0,194.5 C315.3,194.0 317.0,187.5 315.0,186.7 C313.0,185.9 303.0,186.7 301.0,187.5 C299.0,188.3 299.3,194.2 297.8,193.8 C296.3,193.3 289.1,184.9 288.4,183.6 C287.7,182.3 291.1,184.2 291.6,182.8 C292.1,181.4 292.3,174.1 293.0,171.9 C293.7,169.7 298.0,166.0 297.8,164.0 C297.6,162.0 292.9,156.3 291.6,154.7 C290.3,153.1 288.5,151.6 286.9,150.0 C285.3,148.4 279.3,142.9 277.5,141.0 C275.7,139.1 271.8,135.0 271.2,133.4 C270.7,131.8 273.7,129.2 272.8,127.2 C271.9,125.2 264.6,118.3 263.4,116.2 C262.2,114.2 261.8,111.1 262.7,110.0 C263.6,108.9 269.6,108.4 271.2,107.0 C272.9,105.6 276.3,100.4 276.7,98.3 C277.1,96.2 273.2,90.2 274.4,88.9 Z" fill="none" stroke="#2e2e2e" stroke-width="1.05" stroke-linejoin="round"/><path d="M297.8,193.8 C298.0,192.3 299.0,188.3 301.0,187.5 C303.0,186.7 313.0,185.9 315.0,186.7 C317.0,187.5 315.3,194.0 318.0,194.5 C320.7,195.0 335.5,194.0 338.4,191.4 C341.3,188.8 341.0,174.3 343.0,171.9 C345.0,169.5 353.8,171.0 355.6,171.0 C357.4,171.0 358.7,171.1 358.8,171.9 C358.8,172.7 356.4,176.3 356.4,178.0 C356.4,179.7 359.4,183.9 358.8,186.7 C358.1,189.5 351.6,198.6 351.0,201.6 C350.4,204.6 352.4,210.7 354.0,212.5 C355.6,214.3 362.6,216.5 365.0,217.2 C367.4,217.9 372.6,217.9 374.4,218.8 C376.1,219.6 378.1,223.6 380.0,224.7 C381.9,225.8 388.6,226.6 391.0,227.8 C393.4,229.0 399.3,232.3 400.3,234.8 C401.3,237.3 399.3,246.9 399.5,249.0 C399.7,251.1 401.7,251.2 401.9,253.0 C402.1,254.8 400.4,262.2 401.0,264.0 C401.6,265.8 406.9,267.4 407.3,268.7 C407.7,270.0 404.7,273.7 404.0,275.0 C403.3,276.3 402.3,279.5 401.0,280.0 C399.7,280.5 395.4,279.1 393.0,279.5 C390.6,279.9 383.0,281.6 380.0,283.0 C377.0,284.4 369.5,289.3 367.5,291.6 C365.5,293.9 363.1,300.1 362.8,302.5 C362.5,304.9 364.7,309.6 365.2,311.9 C365.7,314.2 366.6,320.1 366.7,322.0 C366.8,323.9 367.0,326.2 366.2,327.8 C365.5,329.4 362.0,334.0 360.0,335.6 C358.0,337.2 351.4,339.3 349.0,341.9 C346.6,344.5 340.4,354.2 339.0,357.5 C337.6,360.8 337.4,367.8 336.6,370.0 C335.8,372.2 333.5,375.4 331.9,376.2 C330.3,377.1 324.9,376.7 322.5,377.0 C320.1,377.3 313.4,378.6 311.6,378.6 C309.8,378.6 308.1,378.0 306.9,377.0 C305.7,376.0 302.0,372.3 301.4,370.0 C300.8,367.7 301.6,359.7 301.4,357.5 C301.2,355.3 299.7,352.2 299.8,351.2 C299.9,350.3 301.0,349.7 302.2,349.0 C303.4,348.3 308.5,346.6 310.0,345.0 C311.5,343.4 313.8,337.5 314.7,335.6 C315.6,333.7 317.0,330.7 317.5,329.0 C318.0,327.3 319.5,322.9 319.0,321.2 C318.5,319.6 313.6,316.2 312.8,315.0 C312.0,313.8 311.3,312.1 312.0,311.0 C312.7,309.9 317.4,306.5 319.0,305.6 C320.6,304.7 323.7,303.7 325.3,303.3 C326.9,302.9 331.5,303.3 333.0,302.5 C334.5,301.7 337.2,298.3 337.8,296.2 C338.4,294.2 338.5,287.3 337.8,285.3 C337.1,283.3 332.9,280.8 331.6,279.0 C330.3,277.2 327.8,272.8 326.9,269.7 C326.0,266.6 324.7,256.0 323.8,252.5 C322.8,249.0 320.8,242.9 319.0,240.0 C317.2,237.1 310.7,231.2 308.8,228.0 C306.8,224.8 303.6,215.8 302.5,212.5 C301.4,209.2 299.9,202.2 299.4,200.0 C298.9,197.8 297.6,195.2 297.8,193.8 Z" fill="none" stroke="#2e2e2e" stroke-width="1.05" stroke-linejoin="round"/><path d="M71.6,393.8 C72.1,391.5 73.1,385.4 74.0,383.6 C74.9,381.8 77.7,379.3 79.4,378.0 C81.1,376.7 87.5,374.1 88.8,372.7 C90.0,371.3 89.8,366.7 90.3,366.4 C90.8,366.1 92.1,368.7 93.4,370.3 C94.7,371.9 98.9,380.0 101.2,380.5 C103.6,381.0 112.3,376.2 113.8,375.0 C115.2,373.8 113.4,371.5 113.8,370.3 C114.1,369.1 115.4,365.4 116.9,364.8 C118.4,364.2 124.6,365.2 126.2,364.8 C127.9,364.4 129.9,361.8 131.0,361.7 C132.1,361.6 133.7,362.9 135.6,364.0 C137.5,365.1 145.4,369.6 147.0,371.0 C148.6,372.4 147.7,374.7 149.4,376.0 C151.2,377.3 158.5,382.4 162.0,382.5 C165.5,382.6 175.4,377.4 179.0,376.7 C182.6,376.0 189.3,376.9 193.0,376.7 C196.7,376.5 206.5,375.7 210.3,375.0 C214.2,374.3 223.1,372.0 226.0,370.5 C228.9,369.0 232.8,363.3 235.3,361.9 C237.8,360.5 244.9,358.6 247.8,358.8 C250.7,358.9 257.7,363.8 260.3,363.4 C262.9,363.0 268.4,357.2 269.7,355.6 C271.0,354.0 270.9,350.1 271.2,350.0 C271.6,349.9 271.7,354.7 272.8,354.8 C273.9,354.9 278.1,352.4 280.3,351.2 C282.5,350.1 288.9,345.5 291.2,345.0 C293.6,344.5 300.0,346.4 300.6,347.3 C301.2,348.2 297.5,350.0 296.0,352.8 C294.5,355.6 290.1,367.6 288.0,371.6 C285.9,375.6 279.8,383.9 278.0,387.2 C276.2,390.5 273.3,397.0 272.5,399.7 C271.7,402.4 271.7,408.2 271.0,410.6 C270.3,413.0 266.8,416.9 266.2,420.0 C265.7,423.1 265.5,434.8 266.6,437.2 C267.7,439.6 274.7,439.5 276.0,440.3 C277.3,441.1 277.7,443.5 277.5,444.2 C277.3,444.9 274.4,445.6 274.4,446.6 C274.4,447.6 276.6,451.5 277.5,452.8 C278.4,454.1 281.2,456.0 282.2,457.5 C283.2,459.0 286.5,463.8 286.0,465.3 C285.5,466.8 279.2,468.4 277.5,470.0 C275.8,471.6 272.0,477.2 271.2,479.4 C270.5,481.6 270.9,486.8 271.2,488.8 C271.6,490.7 274.6,494.7 274.4,495.8 C274.2,496.9 271.2,498.3 269.7,498.0 C268.2,497.7 264.3,493.9 261.9,493.4 C259.5,492.9 252.0,493.4 249.4,493.4 C246.8,493.4 242.9,493.9 240.0,493.4 C237.1,492.9 227.0,490.4 224.4,488.8 C221.8,487.1 219.8,481.8 218.0,479.4 C216.2,477.0 211.5,470.5 208.8,468.4 C206.0,466.3 198.2,462.1 194.7,461.4 C191.2,460.7 182.1,462.7 179.0,462.2 C175.9,461.7 170.5,458.9 168.0,457.5 C165.5,456.1 159.0,451.8 157.2,450.5 C155.4,449.2 154.5,447.6 152.5,446.6 C150.5,445.6 142.3,443.0 140.0,441.9 C137.7,440.8 134.5,438.9 132.5,437.5 C130.5,436.1 125.2,430.8 123.0,429.7 C120.8,428.6 116.3,428.9 113.8,428.0 C111.2,427.1 104.2,422.3 101.2,421.9 C98.3,421.5 90.9,424.7 88.8,424.2 C86.6,423.7 84.3,418.7 82.5,417.2 C80.7,415.7 74.5,412.7 73.0,411.0 C71.5,409.3 70.2,405.0 70.0,403.0 C69.8,401.0 71.1,396.0 71.6,393.8 Z" fill="none" stroke="#2e2e2e" stroke-width="1.05" stroke-linejoin="round"/><line x1="383" y1="51.6" x2="362.8" y2="76.6" stroke="#1DD386" stroke-width="3"/><ellipse cx="392.5" cy="38" rx="22.2" ry="15.6" fill="#1DD386"/><line x1="100" y1="153.4" x2="194.7" y2="123.75" stroke="#937DC9" stroke-width="2.5"/><ellipse cx="71.9" cy="163.6" rx="36.7" ry="15.6" fill="#937DC9"/><line x1="447.2" y1="235.6" x2="358.75" y2="171.9" stroke="#1C4FE2" stroke-width="3"/><ellipse cx="462.8" cy="249" rx="35.9" ry="15.6" fill="#1C4FE2"/><line x1="236" y1="268" x2="326.9" y2="269.7" stroke="#3F38E0" stroke-width="2.5"/><ellipse cx="207.1" cy="267.4" rx="30" ry="15.6" fill="#3F38E0"/><text x="204.8" y="51.0" text-anchor="middle" textLength="32" lengthAdjust="spacingAndGlyphs" font-family="Liberation Sans" font-size="12.5" fill="#fff" stroke="#fff" stroke-width="2.4" stroke-linejoin="round">Molise</text><text x="204.8" y="51.0" text-anchor="middle" textLength="32" lengthAdjust="spacingAndGlyphs" font-family="Liberation Sans" font-size="12.5" fill="#1a1a1a" stroke="#1a1a1a" stroke-width="0.35">Molise</text><text x="392.5" y="42.4" text-anchor="middle" textLength="30" lengthAdjust="spacingAndGlyphs" font-family="Liberation Sans" font-size="12.5" fill="#fff" stroke="#fff" stroke-width="2.4" stroke-linejoin="round">Puglia</text><text x="392.5" y="42.4" text-anchor="middle" textLength="30" lengthAdjust="spacingAndGlyphs" font-family="Liberation Sans" font-size="12.5" fill="#1a1a1a" stroke="#1a1a1a" stroke-width="0.35">Puglia</text><text x="71.9" y="168.0" text-anchor="middle" textLength="51" lengthAdjust="spacingAndGlyphs" font-family="Liberation Sans" font-size="12.5" fill="#fff" stroke="#fff" stroke-width="2.4" stroke-linejoin="round">Campania</text><text x="71.9" y="168.0" text-anchor="middle" textLength="51" lengthAdjust="spacingAndGlyphs" font-family="Liberation Sans" font-size="12.5" fill="#1a1a1a" stroke="#1a1a1a" stroke-width="0.35">Campania</text><text x="462.8" y="253.4" text-anchor="middle" textLength="50" lengthAdjust="spacingAndGlyphs" font-family="Liberation Sans" font-size="12.5" fill="#fff" stroke="#fff" stroke-width="2.4" stroke-linejoin="round">Basilicata</text><text x="462.8" y="253.4" text-anchor="middle" textLength="50" lengthAdjust="spacingAndGlyphs" font-family="Liberation Sans" font-size="12.5" fill="#1a1a1a" stroke="#1a1a1a" stroke-width="0.35">Basilicata</text><text x="207.1" y="271.79999999999995" text-anchor="middle" textLength="42" lengthAdjust="spacingAndGlyphs" font-family="Liberation Sans" font-size="12.5" fill="#fff" stroke="#fff" stroke-width="2.4" stroke-linejoin="round">Calabria</text><text x="207.1" y="271.79999999999995" text-anchor="middle" textLength="42" lengthAdjust="spacingAndGlyphs" font-family="Liberation Sans" font-size="12.5" fill="#1a1a1a" stroke="#1a1a1a" stroke-width="0.35">Calabria</text><text x="196.25" y="421.29999999999995" text-anchor="middle" textLength="30" lengthAdjust="spacingAndGlyphs" font-family="Liberation Sans" font-size="12.5" fill="#fff" stroke="#fff" stroke-width="2.4" stroke-linejoin="round">Sicilia</text><text x="196.25" y="421.29999999999995" text-anchor="middle" textLength="30" lengthAdjust="spacingAndGlyphs" font-family="Liberation Sans" font-size="12.5" fill="#1a1a1a" stroke="#1a1a1a" stroke-width="0.35">Sicilia</text><text x="532.4" y="598.1" text-anchor="end" textLength="154" lengthAdjust="spacingAndGlyphs" font-family="Liberation Sans" font-weight="bold" font-size="15.7" fill="#000">FONTI DATI : ISTAT</text><text x="531.5" y="617.2" text-anchor="end" textLength="298" lengthAdjust="spacingAndGlyphs" font-family="Liberation Sans" font-weight="bold" font-size="15.7" fill="#000">© Salvatore Fiandaca QGIS - 3.14.1-Pi</text></svg></div><div style="position:absolute;left:539px;top:0;width:1px;height:628px;background:#e6e6e6"></div><div style="position:absolute;left:540px;top:0;width:1px;height:629px;background:#d9d9d9"></div><div style="position:absolute;left:0;top:627px;width:540px;height:1px;background:#dedede"></div><div style="position:absolute;left:543px;top:300px;width:1px;height:1px;background:#cfcfcf"></div><div style="position:absolute;left:543px;top:302px;width:1px;height:1px;background:#cfcfcf"></div><div style="position:absolute;left:543px;top:304px;width:1px;height:1px;background:#cfcfcf"></div><div style="position:absolute;left:543px;top:306px;width:1px;height:1px;background:#cfcfcf"></div><div style="position:absolute;left:543px;top:308px;width:1px;height:1px;background:#cfcfcf"></div><div class="cb" style="left:547px;top:-4px;width:475px;height:24px;"></div><div class="arr" style="left:1007.7px;top:6.5px;border-left:3.5px solid transparent;border-right:3.5px solid transparent;border-top:4px solid #4a4a4a"></div><div class="t" style="left:568.1px;top:4px;font-size:11px;letter-spacing:-0.15px">Reg01012019_g_WGS84</div><div class="blk" style="left:547px;top:25px;width:27px;height:22px;"></div><div class="cb" style="left:577px;top:25px;width:424px;height:20px;"></div><div class="arr" style="left:986px;top:33.5px;border-left:3.5px solid transparent;border-right:3.5px solid transparent;border-top:4px solid #4a4a4a"></div><div class="t" style="left:597.8px;top:30px;font-size:11px;letter-spacing:0.1px">Etichette Singole</div><div class="btn" style="left:1005px;top:26px;width:17px;height:17px;"></div><div class="t" style="left:576.7px;top:55px;font-size:11px;letter-spacing:0.2px">Valore</div><div class="fld" style="left:612px;top:50px;width:386px;height:20px;"></div><div class="" style="left:980px;top:51px;width:17px;height:18px;position:absolute;background:#f3f3f3"></div><div class="arr" style="left:983.5px;top:57.8px;border-left:3.5px solid transparent;border-right:3.5px solid transparent;border-top:4px solid #4a4a4a"></div><div class="t" style="left:615.6px;top:55.8px;font-size:8.8px;color:#6a6a6a">abc</div><div class="t" style="left:632.2px;top:55px;font-size:11px;">DEN_REG</div><div class="btn" style="left:1003px;top:50px;width:19px;height:20px;"></div><svg class="ic" style="left:0;top:0" width="1024" height="651" viewBox="0 0 1024 651"><path d="M1016,56.6 C1014.8,54.4 1009.9,54.4 1009.9,57.3 C1009.9,58.7 1011.2,59.4 1013,59.4 L1012,59.4 C1010,59.4 1009,60.6 1009,62 C1009,65.2 1014.8,65.4 1016.4,63" fill="none" stroke="#5a5a5a" stroke-width="1.4"/><circle cx="1016" cy="56.4" r="0.9" fill="#5a2a8a"/><circle cx="1016.3" cy="63.1" r="0.9" fill="#5a2a8a"/><circle cx="1009.4" cy="62.3" r="0.8" fill="#5a2a8a"/></svg><div class="blk" style="left:547px;top:70px;width:27px;height:556px;border-left:1px solid #8c8c8c"></div><div style="position:absolute;left:577px;top:99px;width:445px;height:1px;background:#c9c9c9"></div><div style="position:absolute;left:577px;top:100px;width:445px;height:1px;background:#f8f8f8"></div><div class="tab" style="left:577px;top:76px;width:40px;height:23px;"></div><div class="tab" style="left:616px;top:76px;width:41px;height:23px;"></div><div class="tab" style="left:656px;top:76px;width:41px;height:23px;"></div><div class="tab" style="left:696px;top:76px;width:41px;height:23px;"></div><div class="tab" style="left:736px;top:76px;width:40px;height:23px;"></div><div class="tab" style="left:775px;top:76px;width:42px;height:23px;"></div><div class="tab" style="left:816px;top:74px;width:40px;height:26px;background:linear-gradient(#ffffff,#fbfbfb);border-radius:2px 2px 0 0"></div><div class="tab" style="left:855px;top:76px;width:41px;height:23px;"></div><div class="tab" style="left:895px;top:76px;width:40px;height:23px;"></div><div class="t" style="left:589px;top:83.8px;font-size:7.8px;font-weight:bold;color:#3a3a3a;letter-spacing:-0.1px">abc</div><div class="t" style="left:627.8px;top:81.3px;font-size:7.5px;color:#888">+</div><div class="t" style="left:633.5px;top:81.3px;font-size:7.5px;font-weight:bold;color:#333">ab</div><div class="t" style="left:627.8px;top:86.9px;font-size:7.5px;color:#888">&lt;</div><div class="t" style="left:637.8px;top:86.9px;font-size:7.5px;font-weight:bold;color:#333">c</div><div style="position:absolute;left:667px;top:83.5px;width:15.5px;height:8.5px;border-radius:4.5px;background:#a3b4ff;box-shadow:0 0 1.5px 0.5px #b0c0ff"></div><div class="t" style="left:668.3px;top:83.8px;font-size:7.8px;font-weight:bold;color:#3a3a50;letter-spacing:-0.1px">abc</div><div style="position:absolute;left:706.5px;top:82.5px;width:15.5px;height:9px;border-radius:4.5px;background:#eef0f5;border:1px solid #c8ccd6"></div><div class="t" style="left:708.5px;top:84.7px;font-size:7.3px;font-weight:bold;color:#555;letter-spacing:-0.1px">abc</div><div class="t" style="left:576.9px;top:110px;font-size:11px;letter-spacing:-0.1px">Linee di Richiamo</div><div class="chk" style="left:577px;top:131px;width:12px;height:12px;"></div><svg class="ic" style="left:577px;top:131px" width="12" height="12" viewBox="0 0 12 12"><path d="M2.6,6.3 L4.9,9.2 L9.6,2.4" fill="none" stroke="#111" stroke-width="1.5"/></svg><div class="t" style="left:593.6px;top:132px;font-size:11px;letter-spacing:-0.05px">Disegna linee di richiamo</div><svg class="ic" style="left:726.5px;top:130px" width="19" height="14" viewBox="0 0 19 14"><path d="M0.5,6 L4.5,1.5 L4.5,11 Z" fill="#8a8a8a"/><rect x="4.5" y="0.5" width="9.5" height="12" fill="#f4f4f4" stroke="#8a8a8a" stroke-width="1"/><rect x="6.5" y="2.5" width="6" height="1.6" fill="#6a6a6a"/><rect x="6.5" y="6.5" width="6" height="1.2" fill="#b0b0b0"/><path d="M11.5,9.5 L18,9.5 L14.75,13 Z" fill="#3c3c3c"/></svg><div class="t" style="left:591px;top:157px;font-size:11px;">Stile</div><div class="cb" style="left:735px;top:152px;width:280px;height:20px;"></div><div class="arr" style="left:1000px;top:160.5px;border-left:3.5px solid transparent;border-right:3.5px solid transparent;border-top:4px solid #4a4a4a"></div><svg class="ic" style="left:738px;top:154px" width="17" height="15" viewBox="0 0 17 15"><path d="M2,13 L14,1.5" stroke="#2c3e5c" stroke-width="3"/></svg><div class="t" style="left:755.6px;top:157px;font-size:11px;">Simple lines</div><div class="t" style="left:591px;top:183px;font-size:11px;">Stile linea</div><div class="cb" style="left:703px;top:176px;width:273px;height:24px;border-radius:2px"></div><svg class="ic" style="left:0;top:0" width="1024" height="651" viewBox="0 0 1024 651"><defs><linearGradient id="lg1" x1="0" x2="1" y1="0" y2="0"><stop offset="0" stop-color="#0000d2"/><stop offset="0.35" stop-color="#0a0aa8"/><stop offset="0.65" stop-color="#2a2a55"/><stop offset="1" stop-color="#4a4a4a"/></linearGradient></defs><path d="M706.5,185.8 L973,187.6 L973,189.2 L706.5,190.3 Z" fill="url(#lg1)"/></svg><div class="cb" style="left:977px;top:176px;width:10px;height:24px;border-radius:2px"></div><div class="arr" style="left:978.8px;top:186.3px;border-left:3px solid transparent;border-right:3px solid transparent;border-top:3.7px solid #4a4a4a"></div><div class="t" style="left:591.2px;top:210px;font-size:11px;letter-spacing:0.3px">Minimum length</div><div class="fld" style="left:703px;top:205px;width:181px;height:20px;"></div><div class="sp" style="left:871px;top:206px;width:1px;height:18px"></div><div class="arr" style="left:874.5px;top:209.5px;border-left:3px solid transparent;border-right:3px solid transparent;border-bottom:4px solid #555"></div><div class="arr" style="left:874.5px;top:216.5px;border-left:3px solid transparent;border-right:3px solid transparent;border-top:4px solid #aaa"></div><div class="t" style="left:706.6px;top:210px;font-size:11px;letter-spacing:0.22px">0,000000</div><div class="cb" style="left:889px;top:205px;width:98px;height:21px;"></div><div class="arr" style="left:972.5px;top:214px;border-left:3.5px solid transparent;border-right:3.5px solid transparent;border-top:4px solid #4a4a4a"></div><div class="t" style="left:893px;top:210px;font-size:11px;letter-spacing:0.5px">Millimetri</div><svg class="ic" style="left:994.2px;top:209.4px" width="19" height="14" viewBox="0 0 19 14"><path d="M0.5,6 L4.5,1.5 L4.5,11 Z" fill="#8a8a8a"/><rect x="4.5" y="0.5" width="9.5" height="12" fill="#f4f4f4" stroke="#8a8a8a" stroke-width="1"/><rect x="6.5" y="2.5" width="6" height="1.6" fill="#6a6a6a"/><rect x="6.5" y="6.5" width="6" height="1.2" fill="#b0b0b0"/><path d="M11.5,9.5 L18,9.5 L14.75,13 Z" fill="#3c3c3c"/></svg><div class="t" style="left:591.2px;top:236px;font-size:11px;letter-spacing:0.17px">Offset from feature</div><div class="fld" style="left:703px;top:231px;width:181px;height:19px;"></div><div class="sp" style="left:871px;top:232px;width:1px;height:17px"></div><div class="arr" style="left:874.5px;top:235px;border-left:3px solid transparent;border-right:3px solid transparent;border-bottom:4px solid #555"></div><div class="arr" style="left:874.5px;top:242px;border-left:3px solid transparent;border-right:3px solid transparent;border-top:4px solid #aaa"></div><div class="t" style="left:706.6px;top:236px;font-size:11px;letter-spacing:0.22px">0,000000</div><div class="cb" style="left:889px;top:230px;width:98px;height:21px;"></div><div class="arr" style="left:972.5px;top:239px;border-left:3.5px solid transparent;border-right:3.5px solid transparent;border-top:4px solid #4a4a4a"></div><div class="t" style="left:893px;top:236px;font-size:11px;letter-spacing:0.5px">Millimetri</div><svg class="ic" style="left:994.2px;top:234.7px" width="19" height="14" viewBox="0 0 19 14"><path d="M0.5,6 L4.5,1.5 L4.5,11 Z" fill="#8a8a8a"/><rect x="4.5" y="0.5" width="9.5" height="12" fill="#f4f4f4" stroke="#8a8a8a" stroke-width="1"/><rect x="6.5" y="2.5" width="6" height="1.6" fill="#6a6a6a"/><rect x="6.5" y="6.5" width="6" height="1.2" fill="#b0b0b0"/><path d="M11.5,9.5 L18,9.5 L14.75,13 Z" fill="#3c3c3c"/></svg><div class="t" style="left:591.2px;top:261px;font-size:11px;">Offset from label area</div><div class="fld" style="left:703px;top:256px;width:181px;height:20px;"></div><div class="sp" style="left:871px;top:257px;width:1px;height:18px"></div><div class="arr" style="left:874.5px;top:260.5px;border-left:3px solid transparent;border-right:3px solid transparent;border-bottom:4px solid #555"></div><div class="arr" style="left:874.5px;top:267.5px;border-left:3px solid transparent;border-right:3px solid transparent;border-top:4px solid #aaa"></div><div class="t" style="left:706.6px;top:261px;font-size:11px;letter-spacing:0.22px">0,000000</div><div class="cb" style="left:889px;top:256px;width:98px;height:21px;"></div><div class="arr" style="left:972.5px;top:265px;border-left:3.5px solid transparent;border-right:3.5px solid transparent;border-top:4px solid #4a4a4a"></div><div class="t" style="left:893px;top:261px;font-size:11px;letter-spacing:0.5px">Millimetri</div><svg class="ic" style="left:994.2px;top:260px" width="19" height="14" viewBox="0 0 19 14"><path d="M0.5,6 L4.5,1.5 L4.5,11 Z" fill="#8a8a8a"/><rect x="4.5" y="0.5" width="9.5" height="12" fill="#f4f4f4" stroke="#8a8a8a" stroke-width="1"/><rect x="6.5" y="2.5" width="6" height="1.6" fill="#6a6a6a"/><rect x="6.5" y="6.5" width="6" height="1.2" fill="#b0b0b0"/><path d="M11.5,9.5 L18,9.5 L14.75,13 Z" fill="#3c3c3c"/></svg><div class="chk" style="left:591px;top:285px;width:12px;height:12px;"></div><div class="t" style="left:607.5px;top:286px;font-size:11px;">Draw lines to all feature parts</div><svg class="ic" style="left:994.3px;top:285px" width="19" height="14" viewBox="0 0 19 14"><path d="M0.5,6 L4.5,1.5 L4.5,11 Z" fill="#8a8a8a"/><rect x="4.5" y="0.5" width="9.5" height="12" fill="#f4f4f4" stroke="#8a8a8a" stroke-width="1"/><rect x="6.5" y="2.5" width="6" height="1.6" fill="#6a6a6a"/><rect x="6.5" y="6.5" width="6" height="1.2" fill="#b0b0b0"/><path d="M11.5,9.5 L18,9.5 L14.75,13 Z" fill="#3c3c3c"/></svg><div class="t" style="left:591.2px;top:312px;font-size:11px;">Punto di ancoraggio</div><div class="cb" style="left:703px;top:306px;width:284px;height:21px;"></div><div class="arr" style="left:972.7px;top:315px;border-left:3.5px solid transparent;border-right:3.5px solid transparent;border-top:4px solid #4a4a4a"></div><div class="t" style="left:706.8px;top:312px;font-size:11px;">Centroide</div><svg class="ic" style="left:994.3px;top:310px" width="19" height="14" viewBox="0 0 19 14"><path d="M0.5,6 L4.5,1.5 L4.5,11 Z" fill="#8a8a8a"/><rect x="4.5" y="0.5" width="9.5" height="12" fill="#f4f4f4" stroke="#8a8a8a" stroke-width="1"/><rect x="6.5" y="2.5" width="6" height="1.6" fill="#6a6a6a"/><rect x="6.5" y="6.5" width="6" height="1.2" fill="#b0b0b0"/><path d="M11.5,9.5 L18,9.5 L14.75,13 Z" fill="#3c3c3c"/></svg><div class="t" style="left:591.2px;top:337px;font-size:11px;">Label anchor point</div><div class="cb" style="left:703px;top:332px;width:284px;height:21px;"></div><div class="arr" style="left:972.7px;top:341px;border-left:3.5px solid transparent;border-right:3.5px solid transparent;border-top:4px solid #4a4a4a"></div><div class="t" style="left:706.8px;top:337px;font-size:11px;">Centroide</div><svg class="ic" style="left:994.3px;top:335.3px" width="19" height="14" viewBox="0 0 19 14"><path d="M0.5,6 L4.5,1.5 L4.5,11 Z" fill="#8a8a8a"/><rect x="4.5" y="0.5" width="9.5" height="12" fill="#f4f4f4" stroke="#8a8a8a" stroke-width="1"/><rect x="6.5" y="2.5" width="6" height="1.6" fill="#6a6a6a"/><rect x="6.5" y="6.5" width="6" height="1.2" fill="#b0b0b0"/><path d="M11.5,9.5 L18,9.5 L14.75,13 Z" fill="#3c3c3c"/></svg><div style="position:absolute;left:691px;top:296px;width:85px;height:65px;border:1px solid rgba(255,255,255,0.6)"></div><div style="position:absolute;left:692px;top:297px;width:83px;height:63px;border:2px solid #1a1a1a;box-shadow:inset 0 0 0 1px rgba(255,255,255,0.8)"></div><div class="btn" style="left:577px;top:605px;width:20px;height:20px;"></div><div class="btn" style="left:601px;top:605px;width:20px;height:20px;"></div><div class="chk" style="left:807px;top:609px;width:13px;height:12px;"></div><svg class="ic" style="left:807px;top:609px" width="13" height="12" viewBox="0 0 12 12"><path d="M2.6,6.3 L4.9,9.2 L9.6,2.4" fill="none" stroke="#111" stroke-width="1.5"/></svg><div class="t" style="left:823.8px;top:610px;font-size:11px;letter-spacing:0.2px">Aggiornamento immediato</div><div class="btn" style="left:966px;top:605px;width:56px;height:21px;"></div><div class="t" style="left:976.2px;top:610px;font-size:11px;letter-spacing:-0.1px">Applica</div><div style="position:absolute;left:541px;top:628px;width:483px;height:23px;background:#f0f0f0"></div><div class="t" style="left:215.2px;top:636px;font-size:11px;">Coordinata</div><div class="fld" style="left:272px;top:630px;width:97px;height:21px;"></div><div class="t" style="left:277.3px;top:636px;font-size:11px;letter-spacing:0.15px">788627,4541448</div><div class="t" style="left:395.7px;top:636px;font-size:11px;letter-spacing:-0.6px">Scala</div><div class="fld" style="left:422px;top:631px;width:77px;height:20px;"></div><div class="" style="left:482px;top:632px;width:16px;height:18px;position:absolute;background:#f3f3f3"></div><div class="arr" style="left:485.6px;top:639.8px;border-left:3px solid transparent;border-right:3px solid transparent;border-top:3.5px solid #4a4a4a"></div><div class="t" style="left:425.8px;top:636px;font-size:11px;letter-spacing:0.2px">1:4054601</div><div class="t" style="left:526.6px;top:636px;font-size:11px;letter-spacing:0.12px">Lente d'ingrandimento</div><div class="fld" style="left:641px;top:631px;width:66px;height:19px;"></div><div class="sp" style="left:694px;top:632px;width:1px;height:17px"></div><div class="arr" style="left:697.5px;top:635px;border-left:3px solid transparent;border-right:3px solid transparent;border-bottom:4px solid #555"></div><div class="arr" style="left:697.5px;top:642px;border-left:3px solid transparent;border-right:3px solid transparent;border-top:4px solid #aaa"></div><div class="t" style="left:644.5px;top:636px;font-size:11px;">100%</div><div class="t" style="left:713.7px;top:636px;font-size:11px;letter-spacing:-0.2px">Rotazione</div><div class="fld" style="left:768px;top:631px;width:64px;height:19px;"></div><div class="sp" style="left:819px;top:632px;width:1px;height:17px"></div><div class="arr" style="left:822.5px;top:635px;border-left:3px solid transparent;border-right:3px solid transparent;border-bottom:4px solid #555"></div><div class="arr" style="left:822.5px;top:642px;border-left:3px solid transparent;border-right:3px solid transparent;border-top:4px solid #aaa"></div><div class="t" style="left:772.2px;top:636px;font-size:11px;">0,0 °</div><div class="chk" style="left:836px;top:635px;width:12px;height:12px;"></div><svg class="ic" style="left:836px;top:635px" width="12" height="12" viewBox="0 0 12 12"><path d="M2.6,6.3 L4.9,9.2 L9.6,2.4" fill="none" stroke="#111" stroke-width="1.5"/></svg><div class="t" style="left:852.2px;top:636px;font-size:11px;letter-spacing:-0.15px">Visualizza</div><svg class="ic" style="left:912px;top:633px" width="15" height="14" viewBox="0 0 15 14"><circle cx="7.5" cy="7" r="6.2" fill="none" stroke="#777" stroke-width="1.3"/><path d="M1.5,7 L13.5,7 M7.5,1 L7.5,13 M2.5,4 L12.5,4 M2.5,10 L12.5,10" stroke="#777" stroke-width="1"/><ellipse cx="7.5" cy="7" rx="3" ry="6.2" fill="none" stroke="#777" stroke-width="1"/></svg><div class="t" style="left:929.4px;top:636px;font-size:11px;letter-spacing:-0.35px">EPSG:32632</div><svg class="ic" style="left:1005px;top:633px" width="15" height="14" viewBox="0 0 15 14"><path d="M7.5,0.5 C11.5,0.5 14.5,3 14.5,6 C14.5,9 11.5,11 7.5,11 L6,11 L3,13.5 L3.5,10.5 C1.5,9.5 0.5,8 0.5,6 C0.5,3 3.5,0.5 7.5,0.5 Z" fill="#707070"/><circle cx="4.5" cy="6" r="1" fill="#fff"/><circle cx="7.5" cy="6" r="1" fill="#fff"/><circle cx="10.5" cy="6" r="1" fill="#fff"/></svg><svg style="position:absolute;left:0;top:0;overflow:visible" width="1024" height="651" viewBox="0 0 1024 651"><path d="M552.3,5 C553.5,3.3 556,3.3 557.5,4.6 C559,5.5 561,4.5 563,4.2 C565,4.3 565.6,6 565.6,8.5 C565.6,10.5 565,11.2 563.5,11 C561.5,10 559.5,9.5 557,11.5 C555,13.5 552.5,13.6 552,11.5 C551.7,9 551.7,7 552.3,5 Z" fill="#e2e2e2" stroke="#a3a3a3" stroke-width="0.9"/><path d="M565.8,30.5 L561.2,35.8" stroke="#d49a3a" stroke-width="1.8" stroke-linecap="round"/><path d="M555.2,36.1 L560.8,34.4 L562.8,38.4 L558.7,42.5 L555.2,39.7 Z" fill="#d6ad78"/><path d="M553,31.9 L554.5,30.8 L560.8,33.7 L559.4,35.8 Z" fill="#e8d040"/><path d="M551.7,34.4 L553,33.4 L556.8,35.4 L555.2,37.4 Z" fill="#5d9ad6"/><path d="M550.2,36.8 L551.7,35.9 L557.7,39.3 L557.9,42.3 L550.2,38.6 Z" fill="#e02a2a"/><path d="M581.6,34.8 L584,31.3 L593.8,31.3 L593.8,38.3 L584,38.3 Z" fill="#f3e06a" stroke="#d2b42a" stroke-width="0.9"/><text x="588.9" y="37.3" font-size="5.5" font-family="Liberation Sans" text-anchor="middle" fill="#55603a" font-weight="bold">abc</text><path d="M553,59 L555.5,55.3 L567.4,55.3 L567.4,62.8 L555.5,62.8 Z" fill="#cfe6a6" stroke="#9cb168" stroke-width="0.9"/><text x="561.5" y="61.6" font-size="6" font-family="Liberation Sans" text-anchor="middle" fill="#3a4a6a" font-weight="bold">abc</text><path d="M1009,29.5 L1012.5,27.8 L1015.5,31.5 L1012,33.5 Z" fill="#7391b8" stroke="#5a7898" stroke-width="0.5"/><circle cx="1017" cy="36.5" r="3.8" fill="#f0d22c"/><text x="558" y="84" font-size="8.5" font-family="Liberation Sans" text-anchor="middle" font-weight="bold" fill="#e8eef6" stroke="#e8eef6" stroke-width="2.2" stroke-linejoin="round">abc</text><text x="558" y="84" font-size="8.5" font-family="Liberation Sans" text-anchor="middle" font-weight="bold" fill="#3a3a3a">abc</text><path d="M558,96.8 L564.8,100.9 L558,104.8 L551.3,100.9 Z" fill="#f59a9a" stroke="#d23c3c" stroke-width="0.9"/><path d="M551.3,100.9 L558,104.8 L558,112 L551.3,108.3 Z" fill="#72d13e"/><path d="M564.8,100.9 L558,104.8 L558,112 L564.8,108.3 Z" fill="#f3d552"/><path d="M553.6,122 L553.6,130 M558,122 L558,130 M562.5,122 L562.5,130" stroke="#d6a032" stroke-width="1.3"/><rect x="554.7" y="119" width="7" height="4.2" fill="#e24e4e"/><rect x="550.3" y="129.3" width="6.7" height="5.2" fill="#f2e252" stroke="#d6a032" stroke-width="0.7"/><rect x="559.2" y="129.3" width="6.6" height="5.2" fill="#86bcf0" stroke="#d6a032" stroke-width="0.7"/><path d="M552.8,149.6 C552.8,147.2 554.2,146 557,146" fill="none" stroke="#6cc27e" stroke-width="2.4"/><path d="M556.2,142.6 L560.2,146 L556.2,149.4 Z" fill="#6cc27e"/><path d="M565.2,150.6 C565.2,153.2 563.8,154.6 560.8,154.6" fill="none" stroke="#f28a30" stroke-width="2.4"/><path d="M561.4,151.2 L557,154.6 L561.4,158 Z" fill="#f28a30"/><path d="M747.2,82.2 C749,81 751,81.6 754,82.3 C757,81.6 759,81 760.8,82.2 L760.8,87 C760.8,91.5 757.8,94 754,94 C750.2,94 747.2,91.5 747.2,87 Z" fill="#1e64b4"/><path d="M747.2,82.2 C749,81 751,81.6 754,82.3 C757,81.6 759,81 760.8,82.2 L760.8,84.5 L747.2,84.5 Z" fill="#dc2424"/><path d="M789.5,84 C791.5,83 793.5,83.6 795,84.3 C796.5,83.6 798.5,83 800.5,84 L800.5,89.2 C800.5,92.5 798.2,95 795,95 C791.8,95 789.5,92.5 789.5,89.2 Z" fill="#2a2a2a"/><path d="M787.3,82 C789.3,81 791.3,81.6 792.8,82.3 C794.3,81.6 796.3,81 798.3,82 L798.3,87.2 C798.3,90.5 796,93 792.8,93 C789.6,93 787.3,90.5 787.3,87.2 Z" fill="#e9effd" stroke="#c9d0f0" stroke-width="0.6"/><text x="833.8" y="85" font-size="7.2" font-family="Liberation Sans" text-anchor="middle" font-weight="bold" fill="#333">abc</text><path d="M829.2,93.6 L834.3,86.6" stroke="#333" stroke-width="1.3"/><path d="M873.4,81.2 L875.9,83.7 L873.4,86.2 L870.9,83.7 Z" fill="#6a90bd" stroke="#8fb0d6" stroke-width="0.5"/><path d="M873.4,88.9 L875.9,91.4 L873.4,93.9 L870.9,91.4 Z" fill="#6a90bd" stroke="#8fb0d6" stroke-width="0.5"/><path d="M868.6,85.1 L871.1,87.6 L868.6,90.1 L866.1,87.6 Z" fill="#6a90bd" stroke="#8fb0d6" stroke-width="0.5"/><path d="M878.2,85.1 L880.7,87.6 L878.2,90.1 L875.7,87.6 Z" fill="#6a90bd" stroke="#8fb0d6" stroke-width="0.5"/><path d="M920,81.6 C918,84 914.5,88 912.3,91 L913.8,92.3 C916.5,89 919.2,85.5 920,81.6 Z" fill="#a9a9a9"/><path d="M912.3,91 C910.5,92.6 909.5,93.5 907.2,94.2 C910,94.5 912.5,93.8 913.8,92.3 Z" fill="#3c3c3c"/><path d="M581,614.2 L585.5,609.7 L585.5,612.2 C589.5,612.2 592.3,613.4 592.3,616.2 C592.3,618.2 590,619.7 587.5,620 L588.8,617.4 C589.2,616.4 588,615.7 585.5,615.9 L585.5,618.5 Z" fill="#f0812f"/><path d="M616.5,614.2 L612,609.7 L612,612.2 C608,612.2 605.2,613.4 605.2,616.2 C605.2,618.2 607.5,619.7 610,620 L608.7,617.4 C608.3,616.4 609.5,615.7 612,615.9 L612,618.5 Z" fill="#62b06e"/><ellipse cx="377.2" cy="637.5" rx="3.3" ry="4.6" transform="rotate(-30 377.2 637.5)" fill="none" stroke="#111" stroke-width="1.5"/><path d="M375.6,635.5 L377.2,640 M377.6,634.4 L379.2,639" stroke="#111" stroke-width="1"/><circle cx="379.8" cy="642.8" r="3.8" fill="#fff" stroke="#111" stroke-width="1.6"/><circle cx="380.3" cy="643.2" r="0.9" fill="#333"/><path d="M382.8,635.8 L385,634" stroke="#222" stroke-width="0.9"/><path d="M511.2,640.5 L511.2,637.5 C511.2,634 517.8,634 517.8,637.5 L517.8,640.5" fill="none" stroke="#9a9a9a" stroke-width="1.6"/><rect x="508.8" y="640.2" width="10.5" height="7.2" rx="1.2" fill="#6a6a6a"/></svg></body></html>
